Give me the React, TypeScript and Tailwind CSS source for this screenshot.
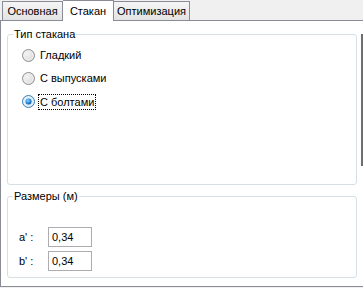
import React from "react";

function Radio({ checked }: { checked?: boolean }) {
  return (
    <svg width="13" height="13" viewBox="0 0 13 13" className="shrink-0">
      <defs>
        <radialGradient id={checked ? "rgc" : "rgu"} cx="0.4" cy="0.4" r="0.7">
          <stop offset="0" stopColor={checked ? "#dff0fb" : "#f4f4f4"} />
          <stop offset="1" stopColor={checked ? "#c5e2f5" : "#d4d4d4"} />
        </radialGradient>
        <radialGradient id="dot" cx="0.4" cy="0.35" r="0.7">
          <stop offset="0" stopColor="#8ad0ff" />
          <stop offset="0.6" stopColor="#2c8ad8" />
          <stop offset="1" stopColor="#0f4d8c" />
        </radialGradient>
      </defs>
      <circle cx="6.5" cy="6.5" r="6" fill={`url(#${checked ? "rgc" : "rgu"})`} stroke={checked ? "#3c7fb1" : "#8e8f8f"} strokeWidth="1" />
      <circle cx="6.5" cy="6.5" r="4.6" fill="none" stroke="#ffffff" strokeOpacity="0.7" strokeWidth="0.8" />
      {checked && <circle cx="6.5" cy="6.5" r="3" fill="url(#dot)" />}
    </svg>
  );
}

export default function App() {
  return (
    <div
      className="w-[363px] h-[288px] bg-[#f0f0f0] overflow-hidden text-[11px] leading-[13px] text-black"
      style={{ fontFamily: '"Liberation Sans", Arial, sans-serif' }}
    >
      {/* tabs */}
      <div className="flex items-end h-[20px] pl-[2px] relative z-10">
        <div className="h-[19px] w-[61px] border border-b-0 border-[#898c95] bg-gradient-to-b from-[#f5f5f5] to-[#e3e3e3] flex items-center justify-center pt-[1px]">
          Основная
        </div>
        <div className="h-[21px] w-[51px] -mb-px border border-b-0 border-l-0 border-[#898c95] bg-white flex items-start justify-center pt-[4px]">
          Стакан
        </div>
        <div className="h-[19px] w-[76px] border border-b-0 border-l-0 border-[#898c95] bg-gradient-to-b from-[#f5f5f5] to-[#e3e3e3] flex items-center justify-center pt-[1px]">
          Оптимизация
        </div>
      </div>
      {/* panel */}
      <div className="h-[267px] border border-r-0 border-[#898c95] bg-white flex">
        <div className="w-[357px] pl-[6px] pt-[7px] flex flex-col">
          <fieldset className="h-[157px] border border-[#d5dfe5] rounded-[3px] pl-[14px]">
            <legend className="ml-[-9px] px-[1px]">Тип стакана</legend>
            <div className="flex flex-col mt-[3px]">
              <div className="h-[23px] flex items-center gap-[3px]">
                <Radio />
                <span className="px-[1px] border border-transparent">Гладкий</span>
              </div>
              <div className="h-[23px] flex items-center gap-[3px]">
                <Radio />
                <span className="px-[1px] border border-transparent">С выпусками</span>
              </div>
              <div className="h-[23px] flex items-center gap-[3px]">
                <Radio checked />
                <span className="px-[1px] border border-dotted border-black leading-[14px]">С болтами</span>
              </div>
            </div>
          </fieldset>
          <fieldset className="mt-[5px] h-[88px] border border-[#d5dfe5] rounded-[3px] pl-[11px]">
            <legend className="ml-[-6px] px-[1px]">Размеры (м)</legend>
            <div className="mt-[24px] flex flex-col gap-[4px]">
              <div className="flex items-center">
                <span className="w-[29px]">a' :</span>
                <div className="w-[44px] h-[20px] border border-[#abadb3] bg-white flex items-center pl-[3px]">0,34</div>
              </div>
              <div className="flex items-center">
                <span className="w-[29px]">b' :</span>
                <div className="w-[44px] h-[20px] border border-[#abadb3] bg-white flex items-center pl-[3px]">0,34</div>
              </div>
            </div>
          </fieldset>
        </div>
        <div className="ml-[4px] mt-[13px] w-[2px] h-[132px] bg-[#6f6f6f]" />
      </div>
    </div>
  );
}
